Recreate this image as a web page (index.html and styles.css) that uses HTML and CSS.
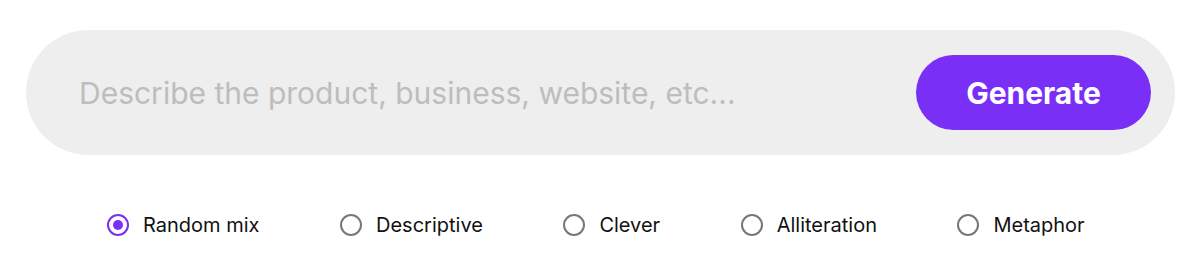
FILE: index.html
```html
<!DOCTYPE html>
<html lang="en">
<head>
<meta charset="utf-8">
<title>Generator</title>
<link rel="stylesheet" href="styles.css">
</head>
<body>
<div class="page">
  <form class="search">
    <input class="search-input" type="text" placeholder="Describe the product, business, website, etc...">
    <button class="generate" type="button">Generate</button>
  </form>
  <div class="styles">
    <label class="option"><span class="radio checked"></span><span class="label">Random mix</span></label>
    <label class="option"><span class="radio"></span><span class="label">Descriptive</span></label>
    <label class="option"><span class="radio"></span><span class="label">Clever</span></label>
    <label class="option"><span class="radio"></span><span class="label">Alliteration</span></label>
    <label class="option"><span class="radio"></span><span class="label">Metaphor</span></label>
  </div>
</div>
</body>
</html>
```

FILE: styles.css
```css
html, body {
  margin: 0;
  padding: 0;
  background: #ffffff;
}
body {
  font-family: Inter, "Noto Sans", sans-serif;
  color: #111111;
}
.page {
  padding: 30px 3px 0 26px;
}
.search {
  display: flex;
  align-items: center;
  height: 125px;
  box-sizing: border-box;
  background: #eeeeee;
  border-radius: 63px;
  padding: 0 24px 0 53px;
  margin: 0;
}
.search-input {
  flex: 1;
  min-width: 0;
  border: none;
  outline: none;
  background: transparent;
  font-family: Inter, "Noto Sans", sans-serif;
  font-size: 30px;
  color: #333333;
  padding: 0;
}
.search-input::placeholder {
  color: #bdbdbd;
}
.generate {
  width: 235px;
  height: 75px;
  border: none;
  border-radius: 38px;
  background: #7a2ff7;
  color: #ffffff;
  font-family: Inter, "Noto Sans", sans-serif;
  font-weight: 700;
  font-size: 30px;
  cursor: pointer;
}
.styles {
  display: flex;
  align-items: center;
  gap: 80.5px;
  padding-left: 81px;
  margin-top: 58px;
}
.option {
  display: flex;
  align-items: center;
  gap: 14px;
  font-size: 20px;
  color: #111111;
}
.radio {
  width: 22px;
  height: 22px;
  box-sizing: border-box;
  border: 2px solid #777777;
  border-radius: 50%;
  display: flex;
  align-items: center;
  justify-content: center;
}
.radio.checked {
  border-color: #7a2ff7;
}
.radio.checked::after {
  content: "";
  width: 10px;
  height: 10px;
  border-radius: 50%;
  background: #7a2ff7;
}
```
